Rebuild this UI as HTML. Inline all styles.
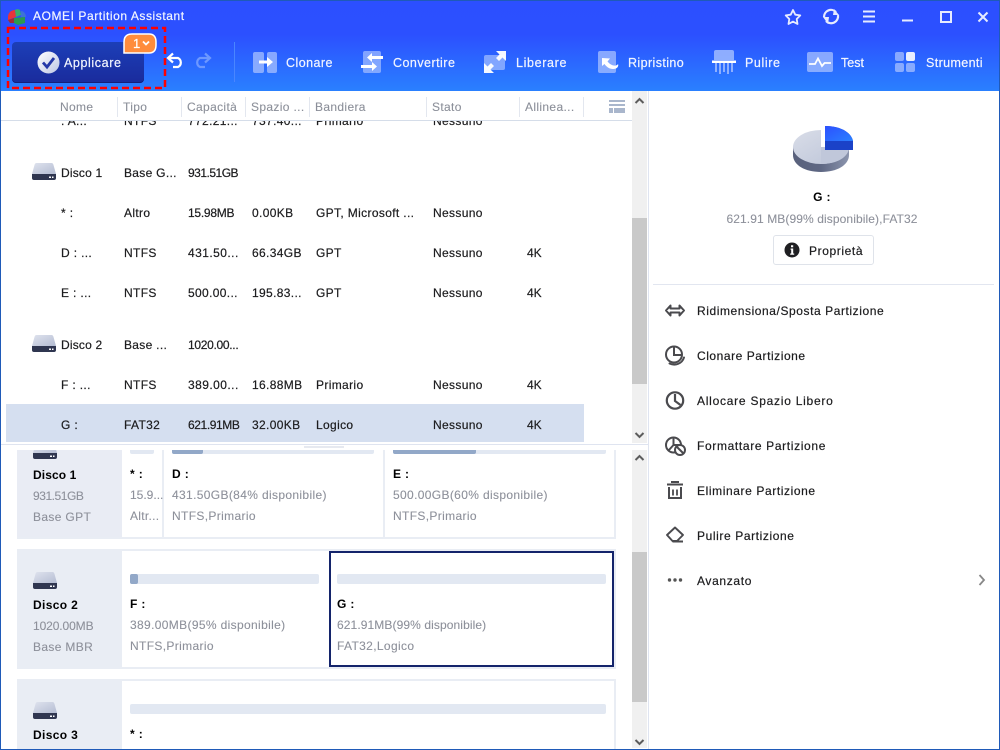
<!DOCTYPE html>
<html><head><meta charset="utf-8"><style>
html,body{margin:0;padding:0;width:1000px;height:750px;overflow:hidden;background:#fff}
body{position:relative;font-family:"Liberation Sans",sans-serif;font-size:12px;color:#1c1c1e}
div,span,svg{position:absolute}
.t{white-space:nowrap;line-height:14px;letter-spacing:.35px;margin-top:1px;-webkit-text-stroke:.2px}
.w{color:#f2f5ff;font-size:12.5px;letter-spacing:.45px}
.g{color:#8d909a;-webkit-text-stroke:.1px}
.h{color:#8b8f99;-webkit-text-stroke:.1px}
.b{font-weight:bold;color:#000;-webkit-text-stroke:0}
.m{letter-spacing:.55px}
.sep{width:1px;height:20px;top:97px;background:#e3e7ef}
.card{left:17px;width:599px;box-sizing:border-box;background:#e9edf4}
.bar{height:10px;background:#e2e8f2;border-radius:2px}
.fill{height:10px;background:#92a8c8;border-radius:2px;left:0;top:0}
</style></head><body>

<!-- lower pane -->
<div style="left:0;top:450px;width:632px;height:299px;overflow:hidden;background:#fff">
<div style="left:0;top:-5px;width:632px;height:304px">
  <div class="card" style="top:0;height:94px"></div>
  <div style="left:17px;top:0;width:105px;height:92px;background:#e9ecf4"></div>
  <div style="left:122px;top:0;width:40px;height:92px;background:#fff"></div>
  <div style="left:164px;top:0;width:219px;height:92px;background:#fff"></div>
  <div style="left:385px;top:0;width:229px;height:92px;background:#fff"></div>
  <div class="bar" style="left:130px;top:-1px;width:24px"></div>
  <div class="bar" style="left:172px;top:-1px;width:202px"><div class="fill" style="width:31px"></div></div>
  <div class="bar" style="left:393px;top:-1px;width:213px"><div class="fill" style="width:83px"></div></div>
  <svg style="left:33px;top:-3px" width="24" height="17" viewBox="0 0 24 17"><defs><linearGradient id="d" x1="0" y1="0" x2="1" y2="1"><stop offset="0" stop-color="#dfe3ee"/><stop offset="1" stop-color="#b4bcd2"/></linearGradient></defs><path d="M4.500 0H19.500Q21 0 21.500 2L24 11H0L2.500 2Q3 0 4.500 0Z" fill="url(#d)"/><path d="M0 11H24V15Q24 17 22 17H2Q0 17 0 15Z" fill="#2f3650"/><path d="M17 13.500h2v1.500h-2zM20 13.500h1.500v1.500H20z" fill="#fff"/></svg>
  <div class="t b" style="left:33px;top:22px;letter-spacing:.1px">Disco 1</div>
  <div class="t g" style="left:33px;top:43px;letter-spacing:-.45px">931.51GB</div>
  <div class="t g" style="left:33px;top:64px">Base GPT</div>
  <div class="t b" style="left:130px;top:21px">* :</div>
  <div class="t g" style="left:130px;top:42px;letter-spacing:0">15.9...</div>
  <div class="t g" style="left:130px;top:63px;letter-spacing:.3px">Altr...</div>
  <div class="t b" style="left:172px;top:21px">D :</div>
  <div class="t g" style="left:172px;top:42px">431.50GB(84% disponibile)</div>
  <div class="t g" style="left:172px;top:63px">NTFS,Primario</div>
  <div class="t b" style="left:393px;top:21px">E :</div>
  <div class="t g" style="left:393px;top:42px">500.00GB(60% disponibile)</div>
  <div class="t g" style="left:393px;top:63px">NTFS,Primario</div>

  <div class="card" style="top:104px;height:120px"></div>
  <div style="left:122px;top:106px;width:207px;height:116px;background:#fff"></div>
  <div style="left:329px;top:106px;width:285px;height:116px;box-sizing:border-box;border:2px solid #14246b;background:#fff"></div>
  <div class="bar" style="left:130px;top:129px;width:189px"><div class="fill" style="width:8px"></div></div>
  <div class="bar" style="left:337px;top:129px;width:269px"></div>
  <svg style="left:33px;top:127px" width="24" height="17" viewBox="0 0 24 17"><path d="M4.500 0H19.500Q21 0 21.500 2L24 11H0L2.500 2Q3 0 4.500 0Z" fill="url(#d)"/><path d="M0 11H24V15Q24 17 22 17H2Q0 17 0 15Z" fill="#2f3650"/><path d="M17 13.500h2v1.500h-2zM20 13.500h1.500v1.500H20z" fill="#fff"/></svg>
  <div class="t b" style="left:33px;top:152px">Disco 2</div>
  <div class="t g" style="left:33px;top:173px;letter-spacing:-.1px">1020.00MB</div>
  <div class="t g" style="left:33px;top:194px">Base MBR</div>
  <div class="t b" style="left:130px;top:151px">F :</div>
  <div class="t g" style="left:130px;top:172px">389.00MB(95% disponibile)</div>
  <div class="t g" style="left:130px;top:193px">NTFS,Primario</div>
  <div class="t b" style="left:337px;top:151px">G :</div>
  <div class="t g" style="left:337px;top:172px;letter-spacing:.1px">621.91MB(99% disponibile)</div>
  <div class="t g" style="left:337px;top:193px">FAT32,Logico</div>

  <div class="card" style="top:234px;height:70px"></div>
  <div style="left:122px;top:236px;width:492px;height:68px;background:#fff"></div>
  <div class="bar" style="left:130px;top:259px;width:476px"></div>
  <svg style="left:33px;top:257px" width="24" height="17" viewBox="0 0 24 17"><path d="M4.500 0H19.500Q21 0 21.500 2L24 11H0L2.500 2Q3 0 4.500 0Z" fill="url(#d)"/><path d="M0 11H24V15Q24 17 22 17H2Q0 17 0 15Z" fill="#2f3650"/><path d="M17 13.500h2v1.500h-2zM20 13.500h1.500v1.500H20z" fill="#fff"/></svg>
  <div class="t b" style="left:33px;top:282px">Disco 3</div>
  <div class="t b" style="left:130px;top:281px">* :</div>
</div>
</div>
<div style="left:0;top:444px;width:648px;height:1px;background:#dfe4f0"></div>
<div style="left:304px;top:446px;width:40px;height:2px;background:#e6e9f0"></div>

<!-- table -->
<div style="left:6px;top:404px;width:578px;height:38px;background:#d5dff0"></div>
<div class="t" style="left:61px;top:113px">: A...</div><div class="t" style="left:124px;top:113px">NTFS</div><div class="t" style="left:188px;top:113px">772.21...</div><div class="t" style="left:252px;top:113px">737.40...</div><div class="t" style="left:316px;top:113px">Primario</div><div class="t" style="left:433px;top:113px">Nessuno</div>

<svg style="left:32px;top:163px" width="24" height="17" viewBox="0 0 24 17"><path d="M4.500 0H19.500Q21 0 21.500 2L24 11H0L2.500 2Q3 0 4.500 0Z" fill="url(#d)"/><path d="M0 11H24V15Q24 17 22 17H2Q0 17 0 15Z" fill="#2f3650"/><path d="M17 13.500h2v1.500h-2zM20 13.500h1.500v1.500H20z" fill="#fff"/></svg>
<div class="t" style="left:61px;top:165px;letter-spacing:.2px">Disco 1</div><div class="t" style="left:124px;top:165px;letter-spacing:.3px">Base G...</div><div class="t" style="left:188px;top:165px;letter-spacing:-.5px">931.51GB</div>

<div class="t" style="left:61px;top:205px">* :</div><div class="t" style="left:124px;top:205px">Altro</div><div class="t" style="left:188px;top:205px;letter-spacing:-.25px">15.98MB</div><div class="t" style="left:252px;top:205px">0.00KB</div><div class="t" style="left:316px;top:205px">GPT, Microsoft ...</div><div class="t" style="left:433px;top:205px">Nessuno</div>

<div class="t" style="left:61px;top:245px">D : ...</div><div class="t" style="left:124px;top:245px">NTFS</div><div class="t" style="left:188px;top:245px;letter-spacing:.45px">431.50...</div><div class="t" style="left:252px;top:245px">66.34GB</div><div class="t" style="left:316px;top:245px">GPT</div><div class="t" style="left:433px;top:245px">Nessuno</div><div class="t" style="left:527px;top:245px;letter-spacing:0">4K</div>

<div class="t" style="left:61px;top:285px">E : ...</div><div class="t" style="left:124px;top:285px">NTFS</div><div class="t" style="left:188px;top:285px">500.00...</div><div class="t" style="left:252px;top:285px">195.83...</div><div class="t" style="left:316px;top:285px">GPT</div><div class="t" style="left:433px;top:285px">Nessuno</div><div class="t" style="left:527px;top:285px;letter-spacing:0">4K</div>

<svg style="left:32px;top:335px" width="24" height="17" viewBox="0 0 24 17"><path d="M4.500 0H19.500Q21 0 21.500 2L24 11H0L2.500 2Q3 0 4.500 0Z" fill="url(#d)"/><path d="M0 11H24V15Q24 17 22 17H2Q0 17 0 15Z" fill="#2f3650"/><path d="M17 13.500h2v1.500h-2zM20 13.500h1.500v1.500H20z" fill="#fff"/></svg>
<div class="t" style="left:61px;top:337px;letter-spacing:.2px">Disco 2</div><div class="t" style="left:124px;top:337px;letter-spacing:.3px">Base ...</div><div class="t" style="left:188px;top:337px;letter-spacing:-.3px">1020.00...</div>

<div class="t" style="left:61px;top:377px">F : ...</div><div class="t" style="left:124px;top:377px">NTFS</div><div class="t" style="left:188px;top:377px;letter-spacing:.45px">389.00...</div><div class="t" style="left:252px;top:377px">16.88MB</div><div class="t" style="left:316px;top:377px">Primario</div><div class="t" style="left:433px;top:377px">Nessuno</div><div class="t" style="left:527px;top:377px;letter-spacing:0">4K</div>

<div class="t" style="left:61px;top:417px">G :</div><div class="t" style="left:124px;top:417px">FAT32</div><div class="t" style="left:188px;top:417px;letter-spacing:-.4px">621.91MB</div><div class="t" style="left:252px;top:417px">32.00KB</div><div class="t" style="left:316px;top:417px">Logico</div><div class="t" style="left:433px;top:417px">Nessuno</div><div class="t" style="left:527px;top:417px;letter-spacing:0">4K</div>

<!-- table header -->
<div style="left:0;top:91px;width:632px;height:29px;background:#fff"></div>
<div style="left:0;top:120px;width:632px;height:1px;background:#d5dde9"></div>
<div class="t h" style="left:60px;top:99px">Nome</div>
<div class="t h" style="left:123px;top:99px">Tipo</div>
<div class="t h" style="left:187px;top:99px">Capacità</div>
<div class="t h" style="left:251px;top:99px">Spazio ...</div>
<div class="t h" style="left:315px;top:99px">Bandiera</div>
<div class="t h" style="left:432px;top:99px">Stato</div>
<div class="t h" style="left:525px;top:99px">Allinea...</div>
<div class="sep" style="left:117px"></div><div class="sep" style="left:181px"></div><div class="sep" style="left:245px"></div><div class="sep" style="left:309px"></div><div class="sep" style="left:426px"></div><div class="sep" style="left:519px"></div><div class="sep" style="left:583px"></div>
<svg style="left:609px;top:100px" width="16" height="13" viewBox="0 0 16 13" fill="#a9b6cc"><path d="M0 0h16v2H0zM0 4h16v2H0zM0 8h4v5H0zM5 8h11v5H5z"/></svg>

<!-- scrollbars -->
<div style="left:632px;top:91px;width:15px;height:352px;background:#f0f0f0"></div>
<div style="left:632px;top:218px;width:15px;height:166px;background:#c9c9c9"></div>
<div style="left:632px;top:450px;width:15px;height:298px;background:#f0f0f0"></div>
<div style="left:632px;top:552px;width:15px;height:150px;background:#c9c9c9"></div>
<svg style="left:632px;top:91px" width="15" height="658" viewBox="0 0 15 658" fill="none" stroke="#5c5c5c" stroke-width="2"><path d="M3.500 12L7.500 8L11.500 12M3.500 342L7.500 346L11.500 342M3.500 369L7.500 365L11.500 369M3.500 649L7.500 653L11.500 649"/></svg>
<div style="left:648px;top:91px;width:1px;height:658px;background:#dfe4f0"></div>

<!-- right pane -->
<svg style="left:790px;top:124px" width="66" height="50" viewBox="0 0 66 50">
<defs><linearGradient id="p1" x1="0" y1="0" x2="1" y2="1"><stop offset="0" stop-color="#d9dde8"/><stop offset="1" stop-color="#bcc4d8"/></linearGradient>
<linearGradient id="p2" x1="0" y1="0" x2="1" y2="0"><stop offset="0" stop-color="#59617c"/><stop offset=".5" stop-color="#5e6783"/><stop offset="1" stop-color="#8c95ae"/></linearGradient>
<linearGradient id="p3" x1="0" y1="0" x2="1" y2="1"><stop offset="0" stop-color="#2c50ff"/><stop offset="1" stop-color="#2a80ff"/></linearGradient></defs>
<path d="M3 23V31C3 41 15 48 31 48C47 48 59 41 59 31V23Z" fill="url(#p2)"/>
<ellipse cx="31" cy="23" rx="28" ry="17" fill="url(#p1)"/>
<path d="M31 0H66V23H31Z" fill="#fff"/>
<path d="M31 23H59C59 33 47 40 31 40Z" fill="#c0c7da"/>
<path d="M35 2C50 2 61 8 63 17V26H35Z" fill="#1b42c8"/>
<path d="M35 2C50 2 61 8 63 17H35Z" fill="url(#p3)"/>
</svg>
<div class="t b" style="left:722px;width:200px;text-align:center;top:189px">G :</div>
<div class="t g" style="left:672px;width:300px;text-align:center;top:211px;letter-spacing:.1px">621.91 MB(99% disponibile),FAT32</div>
<div style="left:773px;top:235px;width:101px;height:30px;box-sizing:border-box;border:1px solid #dfe3ea;border-radius:3px"></div>
<svg style="left:784px;top:242px" width="16" height="16" viewBox="0 0 16 16"><circle cx="8" cy="8" r="7.500" fill="#1f1f22"/><path d="M7 3.200h2.200v2H7zM6.600 6.500h2.600v5h1v1.300H6.200v-1.300h1v-3.700h-.6z" fill="#fff"/></svg>
<div class="t" style="left:809px;top:243px;letter-spacing:.6px">Proprietà</div>
<div style="left:653px;top:284px;width:341px;height:1px;background:#e2e6f0"></div>

<div class="t m" style="left:697px;top:303px;letter-spacing:.57px">Ridimensiona/Sposta Partizione</div>
<div class="t m" style="left:697px;top:348px">Clonare Partizione</div>
<div class="t m" style="left:697px;top:393px;letter-spacing:.75px">Allocare Spazio Libero</div>
<div class="t m" style="left:697px;top:438px;letter-spacing:.65px">Formattare Partizione</div>
<div class="t m" style="left:697px;top:483px;letter-spacing:.6px">Eliminare Partizione</div>
<div class="t m" style="left:697px;top:528px;letter-spacing:.6px">Pulire Partizione</div>
<div class="t m" style="left:697px;top:573px;letter-spacing:.65px">Avanzato</div>

<svg style="left:660px;top:295px" width="335" height="300" viewBox="0 0 335 300" fill="none" stroke="#4a4a4e" stroke-width="2">
<path d="M10.500 10.500L6 15.500L10.500 20.500V17.500H19.500V20.500L24 15.500L19.500 10.500V13.500H10.500Z" stroke-width="2" stroke-linejoin="round"/>
<circle cx="14" cy="59.500" r="8"/><path d="M14 52V60H22"/><path d="M9.500 68.500C15 71 22 69 24 62.500" stroke-linecap="round"/>
<circle cx="15" cy="105.500" r="8.200" stroke-width="2.200"/><path d="M15 99V106L20.500 110" stroke-width="2.200"/>
<circle cx="13.500" cy="150" r="7.500"/><path d="M13.500 142.500V150H21M13.500 150L8.500 155.500"/><circle cx="20" cy="155" r="5" fill="#fff"/><path d="M16.500 151.500L23.500 158.500"/>
<path d="M7 189.500H23" stroke-width="2"/><path d="M11 187H19" stroke-width="2"/><path d="M9 192V203H21V192" stroke-width="2"/><path d="M13 194.500V200.500M17 194.500V200.500" stroke-width="1.800"/>
<path d="M7 240L15 232.500L23 240L17 246H12.500ZM12.500 246.500H23" stroke-width="1.900" stroke-linejoin="round"/>
<circle cx="9.500" cy="285" r="1.700" fill="#555" stroke="none"/><circle cx="15" cy="285" r="1.700" fill="#555" stroke="none"/><circle cx="20.500" cy="285" r="1.700" fill="#555" stroke="none"/>
<path d="M319.500 280L324 285L319.500 290" stroke="#888" stroke-width="1.800"/>
</svg>

<!-- toolbar -->
<div style="left:0;top:0;width:1000px;height:91px;background:linear-gradient(180deg,#2c4fff 0,#2c50ff 38%,#2a80ff 100%)"></div>
<div style="left:0;top:0;width:1000px;height:1px;background:#1f5ab8"></div>

<svg style="left:7px;top:8px" width="20" height="18" viewBox="0 0 20 18"><path d="M1 9C1 5 4 2 8 2L9 9L1 12Z" fill="#e8343a"/><path d="M8 2C9 1 12 1 13 2L14 7L9 9Z" fill="#38b06a"/><path d="M14 3C17 3 19 6 19 9L14 9Z" fill="#3c72d8"/><path d="M7 10L18 9V15L11 17L7 15Z" fill="#2a9a50"/><path d="M1 12L7 10V15L3 15Z" fill="#a02a3a"/></svg>
<div class="t w" style="left:33px;top:8px;font-size:12px;letter-spacing:.57px">AOMEI Partition Assistant</div>

<svg style="left:780px;top:4px" width="215" height="24" viewBox="0 0 215 24" fill="none" stroke="#e6ebff" stroke-width="2">
<path d="M13 6L15.300 10.700L20.300 11.400L16.700 15L17.500 20L13 17.600L8.500 20L9.300 15L5.700 11.400L10.700 10.700Z" stroke-linejoin="round" stroke-width="1.800"/>
<path d="M44 13A7 7 0 0 1 56 8M58 11A7 7 0 0 1 46 17" stroke-width="2.200"/><path d="M54 5L59 11H53ZM48 20L43 13H49Z" fill="#e6ebff" stroke="none"/>
<path d="M83 7.500H95M83 12.500H95M83 17.500H95" stroke-width="2"/>
<path d="M122 16.500H133" stroke-width="2"/>
<path d="M161 8H171V18H161Z" stroke-width="2"/>
<path d="M198.500 8.500L207.500 17.500M207.500 8.500L198.500 17.500" stroke-width="2"/>
</svg>

<div style="left:12px;top:42px;width:132px;height:41px;border-radius:4px;background:linear-gradient(180deg,#1c3fb8,#1a2b9c);box-shadow:inset 0 -1px 0 #14207a"></div>
<svg style="left:37px;top:51px" width="23" height="23" viewBox="0 0 23 23"><defs><linearGradient id="ck" x1="0" y1="0" x2="1" y2="1"><stop offset="0" stop-color="#fff"/><stop offset="1" stop-color="#bcc6e4"/></linearGradient></defs><circle cx="11.500" cy="11.500" r="11" fill="url(#ck)"/><path d="M6 11.500L10 16L17 7" fill="none" stroke="#2438a8" stroke-width="2.800"/></svg>
<div class="t w" style="left:64px;top:55px;letter-spacing:.6px">Applicare</div>
<svg style="left:123px;top:33px" width="34" height="21" viewBox="0 0 34 21"><path d="M1 20V9Q1 1 9 1H26Q33 1 33 9V12Q33 20 26 20Z" fill="#ff8c3c" stroke="#fff" stroke-width="1.500"/><path d="M20 8.500L23 11.500L26 8.500" fill="none" stroke="#fff" stroke-width="1.800"/></svg>
<div class="t" style="left:133px;top:36px;color:#fff;font-size:13px">1</div>
<svg style="left:6px;top:26px" width="161" height="64" viewBox="0 0 161 64"><rect x="2" y="2" width="157" height="60" fill="none" stroke="#f00" stroke-width="2.500" stroke-dasharray="7 4"/></svg>

<svg style="left:166px;top:52px" width="46" height="20" viewBox="0 0 46 20" fill="none" stroke-width="2.200"><path d="M3 6H12A5 5 0 0 1 12 15H7" stroke="#fff"/><path d="M7 1.500L2 6L7 10.500" stroke="#fff"/><path d="M43 6H34A5 5 0 0 0 34 15H39" stroke="#6d98ff"/><path d="M39 1.500L44 6L39 10.500" stroke="#6d98ff"/></svg>
<div style="left:234px;top:42px;width:1px;height:40px;background:#4a86ff"></div>

<svg style="left:250px;top:48px" width="30" height="28" viewBox="0 0 30 28"><rect x="3" y="4" width="11" height="21" rx="2" fill="#a8c0ff" fill-opacity=".75"/><rect x="17" y="4" width="10" height="21" rx="2" fill="#a8c0ff" fill-opacity=".75"/><path d="M9 12.500H17V9L23 14L17 19V15.500H9Z" fill="#fff"/></svg>
<div class="t w" style="left:286px;top:55px">Clonare</div>

<svg style="left:360px;top:48px" width="26" height="28" viewBox="0 0 26 28"><rect x="3" y="3" width="18" height="22" rx="2" fill="#a8c0ff" fill-opacity=".7"/><path d="M23 8H12V5L7 9.500L12 14V11H23Z" fill="#fff"/><path d="M1 17H12V14L17 18.500L12 23V20H1Z" fill="#fff"/></svg>
<div class="t w" style="left:393px;top:55px;letter-spacing:.47px">Convertire</div>

<svg style="left:482px;top:49px" width="26" height="26" viewBox="0 0 26 26"><rect x="2" y="6" width="21" height="15" rx="2" fill="#a8c0ff" fill-opacity=".7"/><path d="M14 2H24V12L20.500 8.500L17 12L14 9L17.500 5.500Z" fill="#fff" fill-opacity=".95"/><path d="M12 24H2V14L5.500 17.500L9 14L12 17L8.500 20.500Z" fill="#fff" fill-opacity=".95"/></svg>
<div class="t w" style="left:516px;top:55px;letter-spacing:.65px">Liberare</div>

<svg style="left:596px;top:49px" width="28" height="26" viewBox="0 0 28 26"><rect x="2" y="2" width="18" height="22" rx="2" fill="#a8c0ff" fill-opacity=".75"/><path d="M6 9L14 9.500L11.500 12.500C14 15.500 17 17 20 16.500C21.500 16 22 15 22 15C23 17.500 21 20 17 20C13.500 20 10.500 18 8.500 15L6 17Z" fill="#fff"/></svg>
<div class="t w" style="left:628px;top:55px;letter-spacing:.4px">Ripristino</div>

<svg style="left:711px;top:48px" width="28" height="26" viewBox="0 0 28 26"><path d="M3 4Q3 2 5 2H21Q23 2 23 4V12H3Z" fill="#a8c0ff" fill-opacity=".8"/><path d="M1 12.500H25V15H1Z" fill="#fff"/><path d="M4 15h2v9H4zM8 15h2v11H8zM12 15h2v9h-2zM16 15h2v11h-2zM20 15h2v9h-2z" fill="#a8c0ff" fill-opacity=".8"/></svg>
<div class="t w" style="left:745px;top:55px;letter-spacing:.6px">Pulire</div>

<svg style="left:807px;top:52px" width="26" height="20" viewBox="0 0 26 20"><rect width="26" height="20" rx="2" fill="#a8c0ff" fill-opacity=".75"/><path d="M2 12H8L11 6.500L15 14L17.500 11H24" fill="none" stroke="#fff" stroke-width="1.800"/></svg>
<div class="t w" style="left:841px;top:55px;letter-spacing:0">Test</div>

<svg style="left:895px;top:52px" width="20" height="20" viewBox="0 0 20 20"><rect width="9" height="9" rx="2" fill="#a8c0ff" fill-opacity=".75"/><rect x="11" width="9" height="9" rx="2" fill="#e8eeff"/><rect y="11" width="9" height="9" rx="2" fill="#a8c0ff" fill-opacity=".75"/><rect x="11" y="11" width="9" height="9" rx="2" fill="#a8c0ff" fill-opacity=".75"/></svg>
<div class="t w" style="left:926px;top:55px;letter-spacing:.38px">Strumenti</div>

<!-- window border -->
<div style="left:0;top:0;width:1px;height:750px;background:#1f5ab8"></div>
<div style="left:999px;top:0;width:1px;height:750px;background:#1f5ab8"></div>
<div style="left:0;top:749px;width:1000px;height:1px;background:#1f5ab8"></div>
</body></html>
